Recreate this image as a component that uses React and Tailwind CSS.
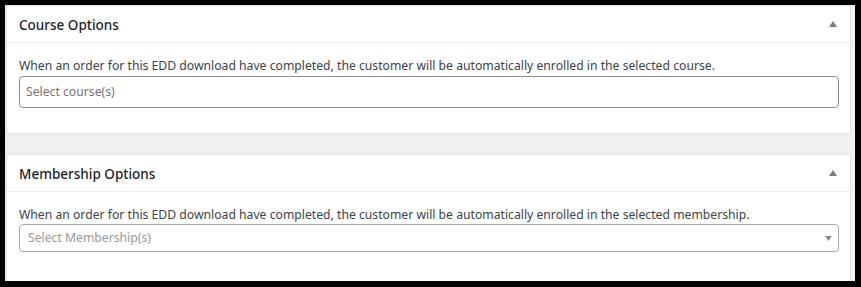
import React from 'react';

const font = { fontFamily: '"Segoe UI", "Noto Sans", sans-serif' };

function Caret({ up, className }) {
  return (
    <svg width="8" height="6" viewBox="0 0 8 6" className={className}>
      <path d={up ? 'M0 6 L4 0 L8 6 Z' : 'M0 0 L8 0 L4 6 Z'} fill="currentColor" />
    </svg>
  );
}

function Panel({ title, children, className }) {
  return (
    <div className={`bg-white border border-[#e2e4e7] ${className}`}>
      <div className="flex items-center justify-between h-[37px] pt-[3px] pl-[12px] pr-[13px] border-b border-[#eeeff0]">
        <h2 className="text-[13.5px] font-medium text-[#1d2327]">{title}</h2>
        <Caret up className="text-[#787c82] -mt-[3px]" />
      </div>
      {children}
    </div>
  );
}

export default function App() {
  return (
    <div className="w-[861px] h-[287px] bg-black pt-[5px] pl-[5px] pr-[6px] pb-[6px]" style={font}>
      <div className="h-full bg-[#f0f0f1] pl-[1px] pr-[4px] overflow-hidden">
        <Panel title="Course Options" className="h-[129px]">
          <div className="pl-[12px] pr-[11px] pt-[13px]">
            <p className="text-[12.2px] leading-[19px] text-[#3c434a]">
              When an order for this EDD download have completed, the customer will be automatically enrolled in the selected course.
            </p>
            <div className="h-[32px] mt-[1px] border border-[#8c8f94] rounded-[4px] flex items-center px-[6px] text-[12.2px] text-[#757575]">
              Select course(s)
            </div>
          </div>
        </Panel>

        <Panel title="Membership Options" className="mt-[20px] h-[140px]">
          <div className="pl-[12px] pr-[11px] pt-[14px]">
            <p className="text-[12.2px] leading-[18px] text-[#3c434a]">
              When an order for this EDD download have completed, the customer will be automatically enrolled in the selected membership.
            </p>
            <div className="h-[28px] border border-[#aaaaaa] rounded-[4px] flex items-center justify-between pl-[8px] pr-[6px] text-[12.2px] text-[#999999]">
              <span>Select Membership(s)</span>
              <Caret className="text-[#888888] w-[7px] h-[5px]" />
            </div>
          </div>
        </Panel>
      </div>
    </div>
  );
}
